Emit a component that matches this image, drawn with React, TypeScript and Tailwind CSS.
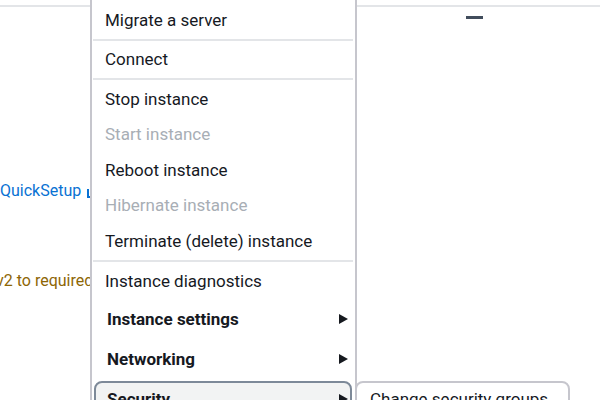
import React from 'react';

type Item = { label: string; disabled?: boolean };

const groups: Item[][] = [
    [{ label: 'Migrate a server' }],
    [{ label: 'Connect' }],
    [
        { label: 'Stop instance' },
        { label: 'Start instance', disabled: true },
        { label: 'Reboot instance' },
        { label: 'Hibernate instance', disabled: true },
        { label: 'Terminate (delete) instance' },
    ],
];

const categories = [
    { label: 'Instance settings', active: false },
    { label: 'Networking', active: false },
    { label: 'Security', active: true },
];

const Caret: React.FC = () => (
    <svg width="9" height="10" viewBox="0 0 9 10" className="shrink-0">
        <polygon points="0,0 9,5 0,10" fill="#16191f" />
    </svg>
);

const ExternalIcon: React.FC = () => (
    <svg width="14" height="14" viewBox="0 0 14 14" fill="none" stroke="#0972d3" strokeWidth="2" className="ml-[6px] shrink-0">
        <path d="M1 5v8h10V8" />
        <path d="M8 1h5v5M13 1 6 8" />
    </svg>
);

const Separator: React.FC = () => (
    <div className="flex h-[3px] items-center pl-px pr-[2px]">
        <div className="h-[2px] w-full bg-[#e3e5e8]" />
    </div>
);

const App: React.FC = () => {
    return (
        <div className="relative h-[400px] w-[600px] overflow-hidden bg-white font-['Roboto',sans-serif] text-[16px] leading-[20px]">
            {/* page behind the menu */}
            <div className="h-[7px] border-b-2 border-[#e3e5e8]" />
            <div className="flex">
                <div className="flex w-[357px] flex-col">
                    <div className="mt-[174px] flex items-center text-[#0972d3]">
                        QuickSetup
                        <ExternalIcon />
                    </div>
                    <div className="-ml-[4px] mt-[70px] whitespace-nowrap text-[#8d6605]">v2 to required</div>
                </div>
                <div className="flex flex-1 justify-center pr-[9px] pt-[9px]">
                    <div className="h-[3px] w-[17px] bg-[#414d5c]" />
                </div>
            </div>

            {/* actions dropdown */}
            <div className="absolute left-[90px] top-0 w-[267px] border-x-2 border-[#c6c6cd] bg-white pt-[2px] text-[17px] text-[#16191f]">
                {groups.map((group, gi) => (
                    <div key={gi}>
                        {gi > 0 && <Separator />}
                        <div className={group.length > 1 ? 'py-px' : ''}>
                            {group.map((item) => (
                                <div
                                    key={item.label}
                                    className={`flex items-center pl-[13px] ${group.length > 1 ? 'h-[35.5px]' : 'h-9'} ${item.disabled ? 'text-[#a8aeb5]' : ''}`}
                                >
                                    {item.label}
                                </div>
                            ))}
                        </div>
                    </div>
                ))}
                <Separator />
                <div className="flex h-9 items-center pl-[13px]">Instance diagnostics</div>
                {categories.map((cat) => (
                    <div key={cat.label} className="h-10 pb-[2.5px] pl-[2px] pr-[3px] pt-[2.5px]">
                        <div
                            className={`flex h-full items-center justify-between rounded-lg border-2 pl-[11px] pr-[2px] font-bold ${cat.active ? 'border-[#7d8998] bg-[#f2f3f3]' : 'border-transparent'}`}
                        >
                            {cat.label}
                            <Caret />
                        </div>
                    </div>
                ))}
            </div>

            {/* security submenu */}
            <div className="absolute left-[355px] top-[381px] w-[215px] rounded-lg border-2 border-[#c6c6cd] bg-white text-[17px] text-[#16191f]">
                <div className="flex h-[31px] items-center pl-[13px]">Change security groups</div>
            </div>
        </div>
    );
};

export default App;
